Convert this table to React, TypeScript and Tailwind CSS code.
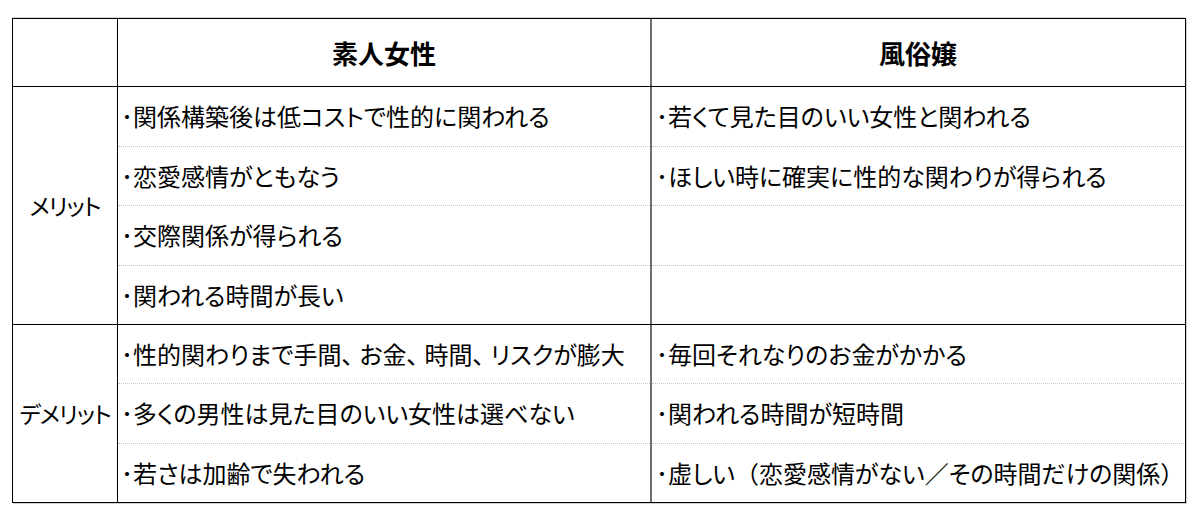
import React from "react";

const font = {
  fontFamily: '"Noto Sans CJK JP", "Noto Sans", sans-serif',
};

function renderText(t: string) {
  const parts = t.split(/([、（）／])/);
  return parts.map((p, i) => {
    if (p === "、") {
      return (
        <span key={i} className="mr-[6px]">
          {p}
        </span>
      );
    }
    if (/^[（）／]$/.test(p)) {
      return (
        <span key={i} className="[font-feature-settings:normal]">
          {p}
        </span>
      );
    }
    return <span key={i}>{p}</span>;
  });
}

function Item({ text, last, pad }: { text: string; last?: boolean; pad: string }) {
  return (
    <div
      className={
        "flex-1 flex items-center text-[24px] text-black leading-none whitespace-nowrap [font-feature-settings:'palt'] " +
        pad +
        (last ? "" : " border-b border-dotted border-[#c4c4c4]")
      }
    >
      {text ? (
        <>
          <span>･</span>
          {renderText(text)}
        </>
      ) : (
        ""
      )}
    </div>
  );
}

function Section({
  label,
  left,
  right,
  height,
}: {
  label: string;
  left: string[];
  right: string[];
  height: string;
}) {
  return (
    <div className={"flex " + height}>
      <div className="w-[105px] flex items-center justify-center text-[23px] tracking-[-1px] text-black [font-feature-settings:'palt'] border-r border-black">
        {label}
      </div>
      <div className="w-[532px] flex flex-col">
        {left.map((t, i) => (
          <Item key={i} text={t} last={i === left.length - 1} pad="pl-[3px]" />
        ))}
      </div>
      <div className="w-[2px] bg-[#6e6e6e]" />
      <div className="w-[532px] flex flex-col">
        {right.map((t, i) => (
          <Item key={i} text={t} last={i === right.length - 1} pad="pl-[4px]" />
        ))}
      </div>
    </div>
  );
}

export default function App() {
  return (
    <div className="w-[1200px] h-[520px] bg-white pt-[18px] pl-[12px]" style={font}>
      <div className="w-[1174px] border border-black shadow-[1px_1px_0_0_#d0d0d0,0_-1px_0_0_#d8d8d8]">
        <div className="flex h-[68px] border-b border-black">
          <div className="w-[105px] border-r border-black" />
          <div className="w-[532px] flex items-center justify-center text-[26px] font-bold text-black">
            素人女性
          </div>
          <div className="w-[2px] bg-[#6e6e6e]" />
          <div className="w-[532px] flex items-center justify-center text-[26px] font-bold text-black">
            風俗嬢
          </div>
        </div>
        <div className="border-b border-black">
          <Section
            label="メリット"
            height="h-[237px]"
            left={[
              "関係構築後は低コストで性的に関われる",
              "恋愛感情がともなう",
              "交際関係が得られる",
              "関われる時間が長い",
            ]}
            right={[
              "若くて見た目のいい女性と関われる",
              "ほしい時に確実に性的な関わりが得られる",
              "",
              "",
            ]}
          />
        </div>
        <Section
          label="デメリット"
          height="h-[177px]"
          left={[
            "性的関わりまで手間、お金、時間、リスクが膨大",
            "多くの男性は見た目のいい女性は選べない",
            "若さは加齢で失われる",
          ]}
          right={[
            "毎回それなりのお金がかかる",
            "関われる時間が短時間",
            "虚しい（恋愛感情がない／その時間だけの関係）",
          ]}
        />
      </div>
    </div>
  );
}
